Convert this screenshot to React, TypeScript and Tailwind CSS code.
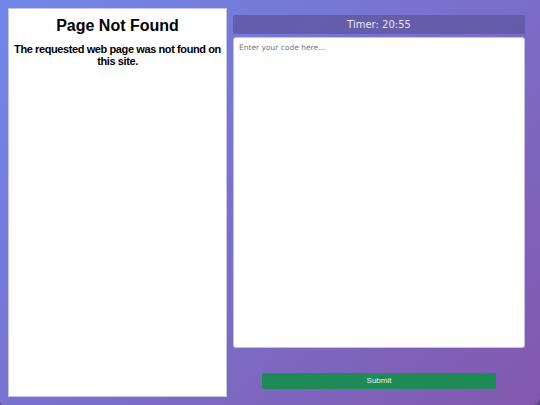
import React, { useState } from 'react';

export default function App() {
    const [code, setCode] = useState('');

    return (
        <div className="w-[540px] h-[405px] bg-[#5a4a8c]">
            <div className="flex h-full gap-[6px] rounded-br-lg rounded-bl-sm bg-[linear-gradient(135deg,#7088ea_0%,#8358ad_100%)] pl-[8px] pr-[15px] pt-[8px] pb-[8px]">
                {/* Left: page content */}
                <div className="w-[219px] shrink-0 bg-white border border-[#c9c4e6] pt-[7px] text-center font-['Liberation_Sans',Arial,sans-serif] text-black">
                    <h1 className="text-[16px] font-bold leading-[20px]">Page Not Found</h1>
                    <p className="mt-[7px] whitespace-nowrap text-[11px] font-bold leading-[12px] tracking-[-0.4px]">
                        The requested web page was not found on
                        <br />
                        this site.
                    </p>
                </div>

                {/* Right: editor */}
                <div className="flex flex-1 flex-col pt-[7px]">
                    <div className="flex h-[19px] items-center justify-center rounded-[2px] bg-[#5f58a0]/80 font-['DejaVu_Sans',sans-serif] text-[10px] text-[#e8e6f5]">
                        Timer: 20:55
                    </div>
                    <textarea
                        value={code}
                        onChange={(e) => setCode(e.target.value)}
                        placeholder="Enter your code here..."
                        className="mt-[3px] h-[311px] w-full resize-none rounded-[3px] border border-[#c6c0e4] bg-white px-[5px] py-[4px] font-['DejaVu_Sans',sans-serif] text-[7.5px] text-gray-800 placeholder:text-[#777] outline-none"
                    />
                    <div className="mt-[25px] flex justify-center">
                        <button className="h-[16px] w-[234px] rounded-[2px] bg-[#1e8a55] font-['Liberation_Sans',Arial,sans-serif] text-[8px] text-[#e6f3ec]">
                            Submit
                        </button>
                    </div>
                </div>
            </div>
        </div>
    );
}
